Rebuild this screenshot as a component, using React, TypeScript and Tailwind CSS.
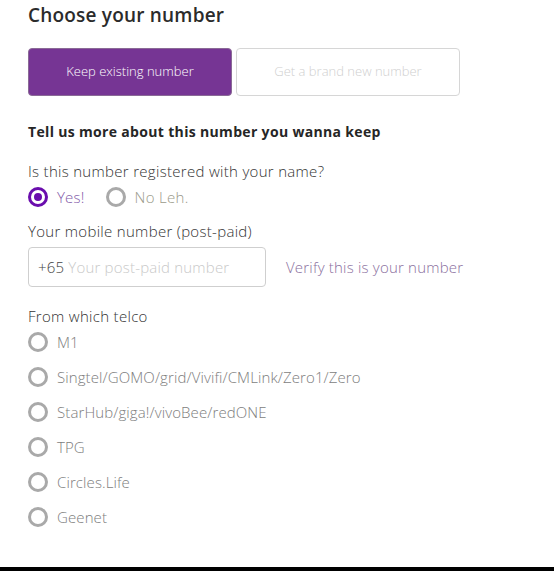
import { useState } from 'react'

const telcos = [
  'M1',
  'Singtel/GOMO/grid/Vivifi/CMLink/Zero1/Zero',
  'StarHub/giga!/vivoBee/redONE',
  'TPG',
  'Circles.Life',
  'Geenet',
]

function Radio({ checked, className = '' }: { checked?: boolean; className?: string }) {
  return (
    <span
      className={
        (checked
          ? 'w-5 h-5 rounded-full border-[3px] border-[#6a0dad] flex items-center justify-center shrink-0 '
          : 'w-5 h-5 rounded-full border-[3px] border-[#a9a9a9] shrink-0 ') + className
      }
    >
      {checked && <span className="w-[8px] h-[8px] rounded-full bg-[#6a0dad]" />}
    </span>
  )
}

export default function App() {
  const [telco] = useState<string | null>(null)

  return (
    <div className="w-[554px] h-[571px] bg-white flex flex-col font-['Open_Sans',sans-serif] text-[#333]">
      <div className="flex-1 px-[28px] pt-[2px]">
        <h1 className="text-[19px] font-semibold text-[#2b2b2b] leading-[26px] tracking-[0.2px]">
          Choose your number
        </h1>

        <div className="flex gap-[4px] mt-[20px]">
          <button className="w-[204px] h-[48px] rounded-[4px] bg-[#763594] border border-[#8a6a96] text-white text-[13px] font-light pb-[1px]">
            Keep existing number
          </button>
          <button className="w-[224px] h-[48px] rounded-[4px] bg-white border border-[#d6d6d6] text-[#cfcfcf] text-[13px] font-light pb-[1px]">
            Get a brand new number
          </button>
        </div>

        <h2 className="mt-[26px] text-[14px] font-bold text-[#262626] leading-[20px] tracking-[0.33px]">
          Tell us more about this number you wanna keep
        </h2>

        <p className="mt-[19px] text-[15px] font-light leading-[20px] tracking-[0.3px]">
          Is this number registered with your name?
        </p>
        <div className="flex items-center mt-[6px] h-[20px]">
          <Radio checked />
          <span className="ml-[9px] text-[15px] font-light text-[#8159a8] tracking-[0.2px]">Yes!</span>
          <Radio className="ml-[21px]" />
          <span className="ml-[9px] text-[15px] font-light text-[#9a9a8a] tracking-[0.3px]">No Leh.</span>
        </div>

        <p className="mt-[14px] text-[15px] font-light leading-[20px] tracking-[0.3px]">Your mobile number (post-paid)</p>
        <div className="flex items-center mt-[6px]">
          <div className="w-[238px] h-[40px] rounded-[4px] border border-[#cfcfcf] flex items-center pl-[9px] text-[15px] font-light tracking-[0.2px]">
            <span className="text-[#444]">+65</span>
            <span className="ml-[4px] text-[#c9c9c9]">Your post-paid number</span>
          </div>
          <span className="ml-[20px] text-[15px] font-light text-[#8a6f9e] tracking-[0.2px]">
            Verify this is your number
          </span>
        </div>

        <p className="mt-[19px] text-[15px] font-light leading-[20px] tracking-[0.3px]">From which telco</p>
        <div className="flex flex-col gap-[15px] mt-[6px]">
          {telcos.map((t) => (
            <label key={t} className="flex items-center h-[20px]">
              <Radio checked={telco === t} />
              <span className="ml-[9px] text-[15px] font-light text-[#7d7d7d] tracking-[0.1px]">{t}</span>
            </label>
          ))}
        </div>
      </div>
      <div className="h-[4px] bg-black" />
    </div>
  )
}
